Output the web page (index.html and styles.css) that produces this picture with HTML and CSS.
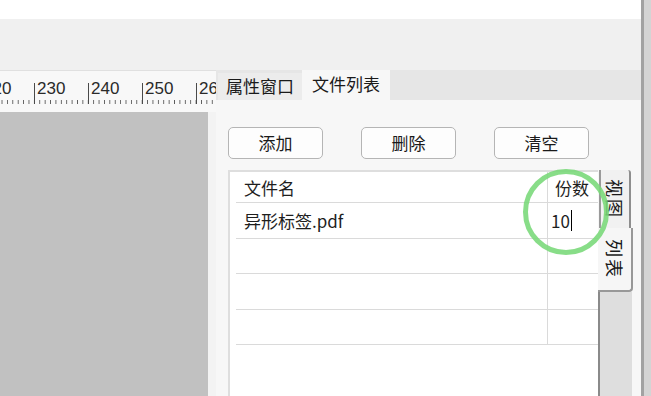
FILE: index.html
```html
<!DOCTYPE html>
<html lang="zh-CN">
<head>
<meta charset="utf-8">
<link rel="stylesheet" href="styles.css">
</head>
<body>
<div class="app">
  <div class="main">
    <div class="titlebar"></div>
    <div class="toolbar"></div>
    <div class="work">
      <div class="left">
        <div class="ruler">
          <div class="marks">
            <span class="mark">220</span>
            <span class="mark">230</span>
            <span class="mark">240</span>
            <span class="mark">250</span>
            <span class="mark">260</span>
          </div>
        </div>
        <div class="canvas-row">
          <div class="canvas"></div>
          <div class="gutter"></div>
        </div>
      </div>
      <div class="dock">
        <div class="tabs">
          <div class="tab">属性窗口</div>
          <div class="tab active">文件列表</div>
        </div>
        <div class="panel">
          <div class="buttons">
            <div class="btn">添加</div>
            <div class="btn">删除</div>
            <div class="btn">清空</div>
          </div>
          <div class="listarea">
            <div class="table">
              <div class="row head">
                <div class="c1">文件名</div>
                <div class="c2 hc">份数</div>
              </div>
              <div class="row">
                <div class="c1">异形标签.pdf</div>
                <div class="c2 edit">10<span class="caret"></span></div>
              </div>
              <div class="row"><div class="c1"></div><div class="c2"></div></div>
              <div class="row"><div class="c1"></div><div class="c2"></div></div>
              <div class="row"><div class="c1"></div><div class="c2"></div></div>
            </div>
            <div class="sidetabs">
              <div class="stab view"><span class="vtext">视图</span></div>
              <div class="stab list"><span class="vtext">列表</span></div>
              <div class="stab rest"></div>
            </div>
          </div>
        </div>
      </div>
    </div>
  </div>
  <div class="vscroll"></div>
</div>
<div class="annot"></div>
</body>
</html>
```
FILE: styles.css
```css
html, body {
  margin: 0;
  padding: 0;
}
body {
  width: 651px;
  height: 396px;
  overflow: hidden;
  position: relative;
  background: #f0f0f0;
  font-family: "Noto Sans CJK SC", "Noto Sans", sans-serif;
  color: #1e1e1e;
}
.app {
  display: flex;
  height: 396px;
}
.main {
  width: 641px;
  display: flex;
  flex-direction: column;
}
.vscroll {
  width: 10px;
  box-sizing: border-box;
  border-left: 3px solid #a2a2a2;
  background: #d4d4d4;
}
.titlebar {
  height: 19px;
  background: #ffffff;
}
.toolbar {
  height: 51px;
  background: #f0f0f0;
}
.work {
  flex: 1;
  display: flex;
  min-height: 0;
}
.left {
  width: 216px;
  display: flex;
  flex-direction: column;
}
.ruler {
  height: 42px;
  box-sizing: border-box;
  background: #f8f8f8;
  border-top: 1px solid #e0e0e0;
  overflow: hidden;
}
.marks {
  display: flex;
  margin-top: 12px;
  margin-left: -20px;
  height: 21px;
  background-image: linear-gradient(to right, #5a5a5a 1px, transparent 1px);
  background-size: 5.4px 4px;
  background-repeat: repeat-x;
  background-position: 0 100%;
}
.mark {
  flex: none;
  width: 54px;
  box-sizing: border-box;
  border-left: 1px solid #4a4a4a;
  padding-left: 2px;
  font-family: "Liberation Sans", Arial, sans-serif;
  font-size: 17px;
  line-height: 12px;
  color: #2a2a2a;
}
.canvas-row {
  flex: 1;
  display: flex;
}
.canvas {
  width: 208px;
  background: #c1c1c1;
}
.gutter {
  flex: 1;
  background: #f3f3f3;
}
.dock {
  flex: 1;
  display: flex;
  flex-direction: column;
}
.tabs {
  height: 30px;
  background: #e6e6e6;
  display: flex;
  align-items: flex-end;
  padding-left: 2px;
}
.tab {
  width: 84px;
  height: 27px;
  background: #ececec;
  font-size: 17px;
  line-height: 26px;
  text-align: center;
  color: #1a1a1a;
}
.tab.active {
  width: 88px;
  height: 30px;
  line-height: 27px;
  background: #f7f7f7;
}
.panel {
  flex: 1;
  background: #f7f7f7;
  padding: 27px 8px 0 12px;
  display: flex;
  flex-direction: column;
  min-height: 0;
}
.buttons {
  display: flex;
  gap: 38px;
  height: 32px;
}
.btn {
  width: 95px;
  height: 32px;
  box-sizing: border-box;
  border: 1px solid #b5b5b5;
  border-radius: 5px;
  background: #fdfdfd;
  font-size: 17px;
  line-height: 30px;
  text-align: center;
  color: #1a1a1a;
}
.listarea {
  margin-top: 11px;
  flex: 1;
  display: flex;
  min-height: 0;
}
.table {
  width: 370px;
  box-sizing: border-box;
  border-left: 2px solid #dedede;
  border-top: 2px solid #dedede;
  background: #ffffff;
  padding-left: 6px;
}
.row {
  display: flex;
  height: 35.5px;
  box-sizing: border-box;
  border-bottom: 1px solid #dadada;
  font-size: 17px;
}
.row.head {
  height: 31px;
}
.c1 {
  flex: none;
  width: 311px;
  box-sizing: border-box;
  padding-left: 8px;
  display: flex;
  align-items: center;
}
.c2 {
  flex: 1;
  box-sizing: border-box;
  border-left: 1px solid #dadada;
  padding-left: 7px;
  display: flex;
  align-items: center;
}
.c2.edit {
  padding-left: 3px;
}
.caret {
  display: inline-block;
  width: 1px;
  height: 21px;
  margin-left: 1px;
  background: #000000;
}
.sidetabs {
  width: 35px;
  display: flex;
  flex-direction: column;
}
.stab {
  box-sizing: border-box;
  display: flex;
  align-items: center;
  justify-content: center;
}
.vtext {
  writing-mode: vertical-rl;
  text-orientation: sideways;
  font-size: 18px;
  letter-spacing: 2px;
  color: #1a1a1a;
}
.stab.view {
  margin-left: 1px;
  width: 32px;
  height: 58px;
  background: #f1f1f1;
  border-left: 2px solid #9a9a9a;
  border-right: 2px solid #8e8e8e;
  border-top-right-radius: 3px;
}
.stab.list {
  width: 35px;
  height: 64px;
  background: #f6f6f6;
  border-right: 2px solid #989898;
  border-bottom: 2px solid #989898;
  border-bottom-right-radius: 4px;
}
.stab.rest {
  flex: 1;
  width: 34px;
  background: #dedede;
  border-left: 2px solid #8a8a8a;
}
.annot {
  position: absolute;
  left: 523px;
  top: 169px;
  width: 86px;
  height: 86px;
  box-sizing: border-box;
  border: 5px solid rgba(120, 216, 120, 0.88);
  border-radius: 50%;
}
```
